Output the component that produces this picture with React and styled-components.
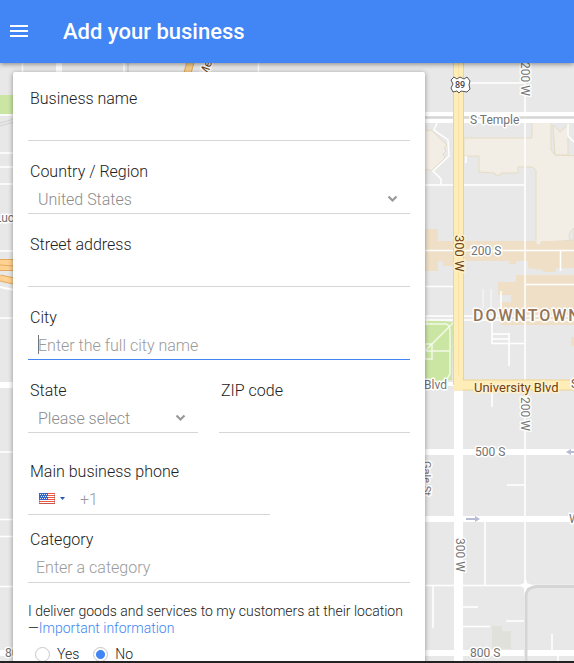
import React from "react";
import styled, { createGlobalStyle, css } from "styled-components";

const GlobalStyle = createGlobalStyle`
  * { box-sizing: border-box; }
  body {
    margin: 0;
    font-family: Roboto, "Open Sans", sans-serif;
    font-weight: 300;
    color: #212121;
  }
`;

const Page = styled.div`
  display: flex;
  flex-direction: column;
  height: 100vh;
  overflow: hidden;
`;

const Header = styled.header`
  position: relative;
  z-index: 2;
  flex: none;
  display: flex;
  align-items: center;
  gap: 34px;
  height: 63px;
  padding: 0 10px;
  background: #4285f4;
  box-shadow: 0 1px 5px rgba(0, 0, 0, 0.45);
`;

const MenuButton = styled.button`
  display: flex;
  padding: 0 0 1px;
  border: 0;
  background: none;
  cursor: pointer;
`;

const Title = styled.h1`
  margin: 0;
  padding-top: 1px;
  font-size: 22px;
  line-height: 28px;
  font-weight: 500;
  color: #fff;
`;

const Main = styled.main`
  position: relative;
  flex: 1;
  min-height: 0;
  padding: 9px 13px 0;
  background: #e8e8e8;
  overflow: hidden;
`;

const MapCanvas = styled.svg`
  position: absolute;
  inset: 0;
  width: 100%;
  height: 100%;
  font-family: Roboto, sans-serif;
  font-weight: 400;
`;

const Card = styled.form`
  position: relative;
  display: flex;
  flex-direction: column;
  max-width: 412px;
  padding: 16px 15px 24px;
  border-radius: 2px;
  background: #fff;
  box-shadow: 0 1px 5px rgba(0, 0, 0, 0.4);
`;

const Fields = styled.div`
  display: flex;
  flex-direction: column;
  gap: 20px;
`;

const Split = styled.div`
  display: grid;
  grid-template-columns: 170px minmax(0, 1fr);
  gap: 21px;
`;

const Field = styled.div`
  display: flex;
  flex-direction: column;
  width: ${(p) => p.$width || "auto"};
  margin-top: ${(p) => p.$space || "0"};
`;

const Label = styled.label`
  padding-left: 2px;
  font-size: 16px;
  line-height: 22px;
`;

const Control = styled.div`
  position: relative;
  display: flex;
  align-items: center;
  height: ${(p) => p.$height || "31px"};
  border-bottom: 1px solid ${(p) => (p.$active ? "#4285f4" : "#d6d6d6")};
`;

const entry = css`
  flex: 1;
  width: 100%;
  min-width: 0;
  height: 100%;
  margin: 0;
  border: 0;
  outline: 0;
  background: none;
  font-family: inherit;
  font-size: 16px;
  font-weight: 300;
  color: #8c8c8c;
`;

const TextInput = styled.input`
  ${entry}
  padding: 2px 10px 0 ${(p) => p.$indent || "10px"};
  &::placeholder { color: #9a9a9a; opacity: 1; }
`;

const Select = styled.select`
  ${entry}
  appearance: none;
  padding: 2px 32px 0 10px;
  cursor: pointer;
`;

const Chevron = styled.svg`
  position: absolute;
  right: 12px;
  top: 12px;
  pointer-events: none;
`;

const Caret = styled.span`
  position: absolute;
  left: 10px;
  top: 6px;
  width: 1px;
  height: 19px;
  background: #777;
`;

const FlagButton = styled.button`
  display: flex;
  align-items: center;
  gap: 5px;
  padding: 0 0 0 11px;
  border: 0;
  background: none;
  cursor: pointer;
`;

const Question = styled.fieldset`
  margin: 20px 0 0;
  padding: 0;
  border: 0;
  font-size: 14px;
`;

const Legend = styled.legend`
  padding: 0;
  line-height: 17px;
`;

const Link = styled.a`
  color: #4285f4;
  text-decoration: none;
`;

const Choices = styled.div`
  display: flex;
  gap: 14px;
  padding: 9px 7px 0;
`;

const Choice = styled.label`
  display: flex;
  align-items: center;
  gap: 7px;
  line-height: 16px;
`;

const Radio = styled.input`
  appearance: none;
  width: 15px;
  height: 15px;
  margin: 0;
  border: 1px solid #c6c6c6;
  border-radius: 50%;
  background: #fff;
  &:checked { background: radial-gradient(circle, #4285f4 4px, #fff 5px); }
`;

const BottomEdge = styled.footer`
  flex: none;
  height: 2px;
  background: #222;
`;

const MapText = styled.text`
  font-size: ${(p) => p.$size || "12px"};
  font-weight: ${(p) => p.$weight || 400};
  fill: ${(p) => p.$color || "#737373"};
  stroke: ${(p) => p.$halo || "#fff"};
  stroke-width: 3px;
  stroke-linejoin: round;
  paint-order: stroke;
`;

const Shield = styled.text`
  font-size: 9px;
  font-weight: 500;
  fill: #444;
`;

function DropArrow() {
  return (
    <Chevron width="11" height="8" viewBox="0 0 11 8" aria-hidden="true">
      <path d="M1.5 1.5 5.5 5.5 9.5 1.5" fill="none" stroke="#999" strokeWidth="2.2" />
    </Chevron>
  );
}

function Flag() {
  return (
    <svg width="16" height="11" viewBox="0 0 16 11" aria-hidden="true">
      <rect width="16" height="11" fill="#fff" />
      <path d="M0 .5h16M0 2.5h16M0 4.5h16M0 6.5h16M0 8.5h16M0 10.5h16" stroke="#ee5a45" />
      <rect width="9" height="7" fill="#3567c4" />
      <path d="M1 1.5h8M2 3.5h7M1 5.5h8" stroke="#dbe6fa" strokeDasharray="1 1" />
      <path d="M.5 7V10.500H15.500V.5" fill="none" stroke="#a8524c" strokeOpacity=".5" />
    </svg>
  );
}

function StreetMap() {
  return (
    <MapCanvas viewBox="0 63 574 598" preserveAspectRatio="xMinYMin slice" aria-hidden="true">
      <g fill="#f2ede5" stroke="#e6dcc4">
        <path d="M420 126 428 131 431 130 447 145 444 148 446 151 443 154 445 158 431 171 428 169 420 173Z" />
        <path d="M464 138H532V122H551V150L555 155 580 156V240L541 242V245H536V170L532 167H518V173H501V175H495V173L479 172V156H464Z" />
        <path d="M553 125 560 132 568 125V155H555Z" />
      </g>
      <path d="M574 228Q567 233 570 240H574Z" fill="#e8e8e8" stroke="#e6dcc4" />
      <g fill="#efdfc7">
        <path d="M420 229H438V241H536V245H541V241H574V268H556V272H543V270L528 268V261H516V264H509V261H454V266H443V261H438V271H420Z" />
        <path d="M516 275H574V325H500V302H511V295H498V282H516Z" />
        <path d="M571 337H574V346H571Z" />
      </g>
      <path d="M420 319 453 322 452 380 420 382Z" fill="#cbe6a3" />
      <path d="M0 95H14V114H0Z" fill="#cbe6a3" />
      <g fill="none" stroke="#fff" strokeWidth="1.500">
        <path d="M470 83H525M525 63V661M420 185H525M420 250.500H574M526 284.500H574M560.500 251V271M420 286.500H454M501 291V315M437 123 434 130 448 140 449 156 433 171 441 179V184M466 156V163" />
        <path d="M483 289V308M491 289V310" strokeOpacity=".5" />
        <path d="M420 316H574M420 320H574M492 322V344M492 334H509M492 339H509M492 343.500H525M509 333V366M492 392V407M507 485H525" />
        <path d="M420 324H446Q450 325 450 331V374L447 379M425 351 454 322M420 351H450M425 344H432V359H425V344M427 316V325" strokeOpacity=".75" />
        <path d="M420 585.500H574M485 522V585M433 586V628M463 607H478M463 626.500H490M506 621H525M552 634V650M558 655V661M568 124V136L574 142" />
        <path d="M0 115H14M0 153H14M0 167H14M0 184H14M0 251H14M0 318H14M0 452H14M0 519.500H14M0 536.500H14M0 586.500H14M22.500 63V73M124 63V73M258.500 63V73" />
      </g>
      <g fill="none" stroke="#fff" strokeWidth="6">
        <path d="M420 452H574M420 519H574M420 653H574M0 385H14M59 63V73M0 653H14" />
        <path d="M458.500 385V661" strokeWidth="9" />
        <path d="M420 114H574M420 121H574M420 384H454" strokeWidth="4" />
      </g>
      <path d="M420 117.500H574M128 63V73" stroke="#d5d5d5" fill="none" strokeWidth="2" />
      <path d="M0 123 14 119M0 126 14 122" stroke="#d1d1d1" fill="none" />
      <path d="M574 586.500H536Q526 588 526 595V661" fill="none" stroke="#d5d5d5" strokeWidth="3" />
      <path d="M492 626H502V631H511V649H492Z" fill="#e1e1dc" />
      <path d="M519 585.500 524 583 525.500 577 527 583 533 585.500 527 588 525.500 592 524 588Z" fill="#fff" />
      <g fill="none">
        <path d="M458.500 60V385M454 385H574" stroke="#edd391" strokeWidth="11" />
        <path d="M458.500 60V390M454 385H574" stroke="#ffedb8" strokeWidth="9" />
        <path d="M458.500 60V375" stroke="#f8e2a4" />
        <path d="M191 60 187 75" stroke="#e2a95a" strokeWidth="8" />
        <path d="M191 60 187 75" stroke="#f6cc8b" strokeWidth="6" />
        <path d="M0 265H14M0 287 14 290" stroke="#fff" strokeWidth="2" />
        <path d="M0 265H14" stroke="#e5aa5d" strokeWidth="12" />
        <path d="M0 265H14" stroke="#ffd292" strokeWidth="10" />
        <path d="M0 265 14 266" stroke="#e5aa5d" />
        <path d="M0 278 14 281" stroke="#e5aa5d" strokeWidth="7" />
        <path d="M0 278 14 281" stroke="#ffd292" strokeWidth="5" />
      </g>
      <g fill="#b8bbd4">
        <path d="M466 518H475V516L480 519 475 522V520H466Z" />
        <path d="M574 451H571V449L566 452 571 455V453H574Z" />
      </g>
      <path d="M454 77 457 79 460 77 464 79 467 77 470 81 469 85 470 89 467 92 461 91 459 93 457 91 453 92 451 88 453 84 451 80Z" fill="#fff" stroke="#555" />
      <Shield x="455" y="88">89</Shield>
      <MapText x="470" y="124">S Temple</MapText>
      <MapText x="471" y="255">200 S</MapText>
      <MapText x="475" y="456">500 S</MapText>
      <MapText x="470" y="657">800 S</MapText>
      <MapText x="424" y="389">Blvd</MapText>
      <MapText x="569" y="523">W</MapText>
      <MapText x="571" y="388" $color="#7a4a14">S</MapText>
      <MapText x="-5" y="222">Luc</MapText>
      <MapText x="5" y="657">800 S</MapText>
      <MapText x="474" y="392" $size="13px" $color="#6f4212" $halo="#fff1cc">University Blvd</MapText>
      <MapText x="473" y="321" $size="16px" $weight="500" $color="#957556" letterSpacing="2">DOWNTOWN</MapText>
      <MapText transform="translate(521 62) rotate(90)">200 W</MapText>
      <MapText transform="translate(521 397) rotate(90)">200 W</MapText>
      <MapText transform="translate(456 538) rotate(90)">300 W</MapText>
      <MapText transform="translate(455 235) rotate(90)" $size="13px" $color="#6f4212" $halo="#fff1cc">300 W</MapText>
      <MapText transform="translate(423 461) rotate(90)" $size="11px">Gale St</MapText>
      <MapText transform="translate(207 78) rotate(-72)" $color="#6f4212">Me</MapText>
    </MapCanvas>
  );
}

export default function App() {
  return (
    <Page>
      <GlobalStyle />
      <Header>
        <MenuButton type="button" aria-label="Menu">
          <svg width="19" height="12" viewBox="0 0 19 12" aria-hidden="true">
            <path d="M0 1h18M0 6h18M0 11h18" stroke="#fff" strokeWidth="2" />
          </svg>
        </MenuButton>
        <Title>Add your business</Title>
      </Header>
      <Main>
        <StreetMap />
        <Card>
          <Fields>
            <Field>
              <Label htmlFor="name">Business name</Label>
              <Control><TextInput id="name" /></Control>
            </Field>
            <Field>
              <Label htmlFor="country">Country / Region</Label>
              <Control>
                <Select id="country"><option>United States</option></Select>
                <DropArrow />
              </Control>
            </Field>
            <Field>
              <Label htmlFor="street">Street address</Label>
              <Control><TextInput id="street" /></Control>
            </Field>
            <Field>
              <Label htmlFor="city">City</Label>
              <Control $active>
                <TextInput id="city" placeholder="Enter the full city name" />
                <Caret />
              </Control>
            </Field>
            <Split>
              <Field>
                <Label htmlFor="state">State</Label>
                <Control>
                  <Select id="state"><option>Please select</option></Select>
                  <DropArrow />
                </Control>
              </Field>
              <Field>
                <Label htmlFor="zip">ZIP code</Label>
                <Control><TextInput id="zip" /></Control>
              </Field>
            </Split>
          </Fields>
          <Field $width="242px" $space="28px">
            <Label htmlFor="phone">Main business phone</Label>
            <Control $height="32px">
              <FlagButton type="button" aria-label="Country code">
                <Flag />
                <svg width="5" height="3" viewBox="0 0 5 3" aria-hidden="true">
                  <path d="M0 0h5L2.500 3Z" fill="#2a56b0" />
                </svg>
              </FlagButton>
              <TextInput id="phone" placeholder="+1" $indent="15px" />
            </Control>
          </Field>
          <Field $space="14px">
            <Label htmlFor="category">Category</Label>
            <Control $height="32px">
              <TextInput id="category" placeholder="Enter a category" $indent="8px" />
            </Control>
          </Field>
          <Question>
            <Legend>
              I deliver goods and services to my customers at their location —<Link href="#info">Important information</Link>
            </Legend>
            <Choices>
              <Choice><Radio type="radio" name="deliver" />Yes</Choice>
              <Choice><Radio type="radio" name="deliver" defaultChecked />No</Choice>
            </Choices>
          </Question>
        </Card>
      </Main>
      <BottomEdge />
    </Page>
  );
}
